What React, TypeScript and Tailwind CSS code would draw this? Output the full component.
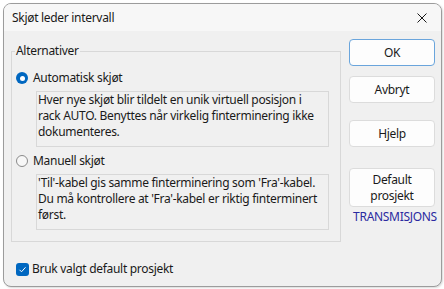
import React from 'react';

const font = { fontFamily: '"Segoe UI", "Noto Sans", sans-serif' };

function Radio({ checked }: { checked: boolean }) {
  if (checked) {
    return (
      <span className="w-[12px] h-[12px] rounded-full bg-[#0067c0] flex items-center justify-center shrink-0">
        <span className="w-[5px] h-[5px] rounded-full bg-white" />
      </span>
    );
  }
  return <span className="w-[12px] h-[12px] rounded-full border border-[#8a8a8a] bg-[#f7f7f7] shrink-0" />;
}

function DescBox({ children }: { children: React.ReactNode }) {
  return (
    <div className="ml-[24px] mr-[11px] h-[56px] border border-[#d8d8d8] pl-[1px] text-[12px] leading-[16px] text-[#1a1a1a] whitespace-nowrap">
      {children}
    </div>
  );
}

function DlgButton({ children, primary, className = '' }: { children: React.ReactNode; primary?: boolean; className?: string }) {
  return (
    <button
      className={`w-[86px] rounded-[4px] bg-[#fdfdfd] text-[12px] leading-[16px] text-[#1a1a1a] flex flex-col items-center justify-center border ${
        primary ? 'border-[#6aa5dc]' : 'border-[#dcdcdc]'
      } ${className}`}
    >
      {children}
    </button>
  );
}

export default function App() {
  return (
    <div className="w-[444px] h-[289px] bg-white pt-[3px] pl-[3px] tracking-[-0.3px]" style={font}>
      <div className="w-[439px] h-[284px] rounded-[8px] border border-[#9c9c9c] bg-[#f0f0f0] overflow-hidden flex flex-col shadow-[1px_1px_2px_rgba(0,0,0,0.15)]">
        {/* title bar */}
        <div className="h-[27px] bg-[#f7f7f7] flex items-center justify-between pl-[8px] pr-[14px] shrink-0">
          <span className="text-[12px] text-[#1a1a1a]">Skjøt leder intervall</span>
          <svg width="10" height="10" viewBox="0 0 10 10" stroke="#1a1a1a" strokeWidth="1">
            <path d="M0.5 0.5 L9.5 9.5 M9.5 0.5 L0.5 9.5" />
          </svg>
        </div>

        <div className="flex flex-1 pl-[7px] pr-[6px] gap-[8px]">
          {/* left column */}
          <div className="w-[330px] flex flex-col">
            <fieldset className="mt-[12px] border border-[#d8d8d8] pb-[11px]">
              <legend className="ml-[3px] px-[1px] text-[12px] leading-[16px] text-[#1a1a1a]">Alternativer</legend>
              <div className="flex items-center gap-[5px] pl-[4px] mt-[11px] h-[16px]">
                <Radio checked />
                <span className="text-[12px] leading-[16px] text-[#1a1a1a]">Automatisk skjøt</span>
              </div>
              <div className="mt-[5px]">
                <DescBox>
                  Hver nye skjøt blir tildelt en unik virtuell posisjon i<br />
                  rack AUTO. Benyttes når virkelig finterminering ikke<br />
                  dokumenteres.
                </DescBox>
              </div>
              <div className="flex items-center gap-[5px] pl-[4px] mt-[6px] h-[16px]">
                <Radio checked={false} />
                <span className="text-[12px] leading-[16px] text-[#1a1a1a]">Manuell skjøt</span>
              </div>
              <div className="mt-[5px]">
                <DescBox>
                  'Til'-kabel gis samme finterminering som 'Fra'-kabel.<br />
                  Du må kontrollere at 'Fra'-kabel er riktig finterminert<br />
                  først.
                </DescBox>
              </div>
            </fieldset>
            <div className="flex items-center gap-[3px] pl-[5px] mt-[19px] h-[16px]">
              <span className="w-[13px] h-[13px] rounded-[3px] bg-[#0067c0] flex items-center justify-center">
                <svg width="9" height="9" viewBox="0 0 9 9" fill="none" stroke="white" strokeWidth="1">
                  <path d="M1.5 4.8 L3.5 6.8 L7.5 2.3" />
                </svg>
              </span>
              <span className="text-[12px] leading-[16px] text-[#1a1a1a]">Bruk valgt default prosjekt</span>
            </div>
          </div>

          {/* right column */}
          <div className="w-[86px] flex flex-col">
            <DlgButton primary className="mt-[8px] h-[27px]">OK</DlgButton>
            <DlgButton className="mt-[10px] h-[27px]">Avbryt</DlgButton>
            <DlgButton className="mt-[17px] h-[27px]">Hjelp</DlgButton>
            <DlgButton className="mt-[21px] h-[39px]">
              <span>Default</span>
              <span>prosjekt</span>
            </DlgButton>
            <div className="mt-[2px] text-[12px] leading-[16px] text-[#2a2aa0] text-center whitespace-nowrap -mr-[3px] pl-[3px]">
              TRANSMISJONS
            </div>
          </div>
        </div>
      </div>
    </div>
  );
}
